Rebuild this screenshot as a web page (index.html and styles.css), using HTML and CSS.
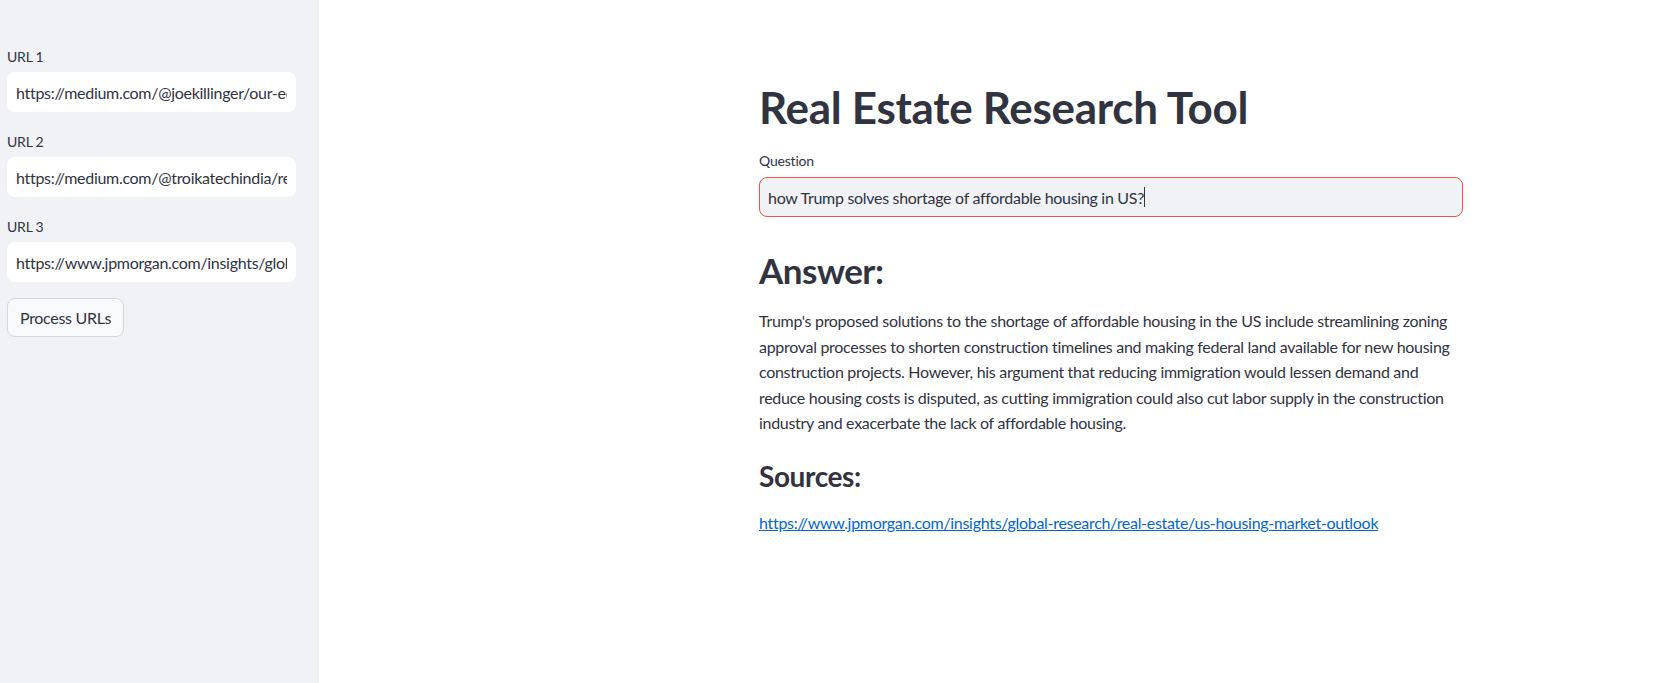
FILE: index.html
```html
<!DOCTYPE html>
<html lang="en">
<head>
<meta charset="utf-8">
<title>Real Estate Research Tool</title>
<link rel="stylesheet" href="styles.css">
</head>
<body>
<div class="app">
  <aside class="sidebar">
    <div class="field">
      <label class="label">URL 1</label>
      <div class="side-input"><span>https://medium.com/@joekillinger/our-economy-needs-affordable-housing</span></div>
    </div>
    <div class="field">
      <label class="label">URL 2</label>
      <div class="side-input"><span>https://medium.com/@troikatechindia/real-estate-market</span></div>
    </div>
    <div class="field">
      <label class="label">URL 3</label>
      <div class="side-input"><span>https://www.jpmorgan.com/insights/global-research/real-estate/us-housing-market-outlook</span></div>
    </div>
    <button class="btn">Process URLs</button>
  </aside>
  <main class="main">
    <div class="block">
      <h1 class="title">Real Estate Research Tool</h1>
      <label class="label q-label">Question</label>
      <div class="q-input">how Trump solves shortage of affordable housing in US?<span class="caret"></span></div>
      <h2 class="h2">Answer:</h2>
      <p class="answer">Trump's proposed solutions to the shortage of affordable housing in the US include streamlining zoning approval processes to shorten construction timelines and making federal land available for new housing construction projects. However, his argument that reducing immigration would lessen demand and reduce housing costs is disputed, as cutting immigration could also cut labor supply in the construction industry and exacerbate the lack of affordable housing.</p>
      <h3 class="h3">Sources:</h3>
      <p class="source"><a href="#" class="link">https://www.jpmorgan.com/insights/global-research/real-estate/us-housing-market-outlook</a></p>
    </div>
  </main>
</div>
</body>
</html>
```
FILE: styles.css
```css
* { box-sizing: border-box; }
html, body {
  margin: 0;
  padding: 0;
  height: 100%;
}
body {
  font-family: "Source Sans Pro", Lato, "Liberation Sans", sans-serif;
  color: #31333f;
  background: #ffffff;
}
.app {
  display: flex;
  height: 683px;
  overflow: hidden;
}
.sidebar {
  width: 319px;
  flex: none;
  background: #f0f2f6;
  padding: 47px 23px 0 7px;
  display: flex;
  flex-direction: column;
  align-items: flex-start;
}
.field {
  width: 100%;
  display: flex;
  flex-direction: column;
  margin-bottom: 20px;
}
.field:nth-of-type(3) {
  margin-bottom: 16px;
}
.label {
  font-size: 14px;
  line-height: 20px;
  color: #31333f;
  margin-bottom: 5px;
  letter-spacing: -0.2px;
}
.side-input {
  height: 40px;
  background: #ffffff;
  border-radius: 8px;
  padding: 0 9px;
  display: flex;
  align-items: center;
  font-size: 16px;
  letter-spacing: -0.3px;
  overflow: hidden;
  white-space: nowrap;
}
.side-input span { overflow: hidden; }
.btn {
  height: 39px;
  padding: 0 12px;
  border: 1px solid #d5d7dc;
  border-radius: 8px;
  background: #f8f9fb;
  font-family: inherit;
  font-size: 16px;
  letter-spacing: -0.3px;
  color: #31333f;
}
.main {
  flex: 1;
  padding-left: 440px;
}
.block {
  width: 704px;
  padding-top: 81px;
}
.title {
  font-size: 44px;
  font-weight: 700;
  line-height: 52px;
  margin: 0 0 18px;
  letter-spacing: -0.3px;
}
.q-label {
  display: block;
  margin-bottom: 6px;
}
.q-input {
  height: 40px;
  border: 1px solid #ff4b4b;
  border-radius: 8px;
  background: #f0f2f6;
  padding: 0 8px;
  display: flex;
  align-items: center;
  font-size: 16px;
  letter-spacing: -0.3px;
}
.caret {
  display: inline-block;
  width: 1px;
  height: 20px;
  background: #31333f;
}
.h2 {
  font-size: 35px;
  font-weight: 700;
  line-height: 42px;
  margin: 32px 0 17px;
  letter-spacing: -0.5px;
}
.answer {
  font-size: 16px;
  line-height: 25.6px;
  margin: 0 0 22px;
  letter-spacing: -0.3px;
}
.h3 {
  font-size: 28px;
  font-weight: 700;
  line-height: 36px;
  margin: 0 0 16px;
  letter-spacing: -0.4px;
}
.source {
  font-size: 16px;
  line-height: 25.6px;
  margin: 0;
  letter-spacing: -0.3px;
}
.link {
  color: #0068c9;
  text-decoration: underline;
}
```
